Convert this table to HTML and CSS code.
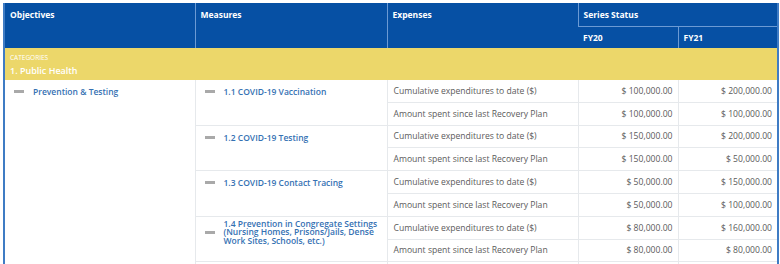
FILE: index.html
```html
<!DOCTYPE html>
<html>
<head>
<meta charset="utf-8">
<link rel="stylesheet" href="styles.css">
</head>
<body>
<div class="wrap">
<table class="grid">
  <colgroup>
    <col class="c-obj"><col class="c-mea"><col class="c-exp"><col class="c-fy"><col class="c-fy2">
  </colgroup>
  <thead>
    <tr class="h1">
      <th rowspan="2">Objectives</th>
      <th rowspan="2">Measures</th>
      <th rowspan="2">Expenses</th>
      <th colspan="2" class="ss">Series Status</th>
    </tr>
    <tr class="h2">
      <th>FY20</th>
      <th class="last">FY21</th>
    </tr>
  </thead>
  <tbody>
    <tr class="cat">
      <td colspan="5"><div class="cat-label">CATEGORIES</div><div class="cat-name">1. Public Health</div></td>
    </tr>
    <tr class="r">
      <td rowspan="9" class="obj"><div class="item"><span class="dash"></span><a>Prevention &amp; Testing</a></div></td>
      <td rowspan="2" class="mea"><div class="item"><span class="dash"></span><a>1.1 COVID-19 Vaccination</a></div></td>
      <td class="exp">Cumulative expenditures to date ($)</td>
      <td class="num">$ 100,000.00</td>
      <td class="num">$ 200,000.00</td>
    </tr>
    <tr class="r">
      <td class="exp">Amount spent since last Recovery Plan</td>
      <td class="num">$ 100,000.00</td>
      <td class="num">$ 100,000.00</td>
    </tr>
    <tr class="r">
      <td rowspan="2" class="mea"><div class="item"><span class="dash"></span><a>1.2 COVID-19 Testing</a></div></td>
      <td class="exp">Cumulative expenditures to date ($)</td>
      <td class="num">$ 150,000.00</td>
      <td class="num">$ 200,000.00</td>
    </tr>
    <tr class="r">
      <td class="exp">Amount spent since last Recovery Plan</td>
      <td class="num">$ 150,000.00</td>
      <td class="num">$ 50,000.00</td>
    </tr>
    <tr class="r">
      <td rowspan="2" class="mea"><div class="item"><span class="dash"></span><a>1.3 COVID-19 Contact Tracing</a></div></td>
      <td class="exp">Cumulative expenditures to date ($)</td>
      <td class="num">$ 50,000.00</td>
      <td class="num">$ 150,000.00</td>
    </tr>
    <tr class="r">
      <td class="exp">Amount spent since last Recovery Plan</td>
      <td class="num">$ 50,000.00</td>
      <td class="num">$ 100,000.00</td>
    </tr>
    <tr class="r">
      <td rowspan="2" class="mea tight"><div class="item"><span class="dash"></span><a>1.4 Prevention in Congregate Settings (Nursing Homes, Prisons/Jails, Dense Work Sites, Schools, etc.)</a></div></td>
      <td class="exp">Cumulative expenditures to date ($)</td>
      <td class="num">$ 80,000.00</td>
      <td class="num">$ 160,000.00</td>
    </tr>
    <tr class="r">
      <td class="exp">Amount spent since last Recovery Plan</td>
      <td class="num">$ 80,000.00</td>
      <td class="num">$ 80,000.00</td>
    </tr>
    <tr class="r tail">
      <td class="mea"></td>
      <td class="exp"></td>
      <td class="num"></td>
      <td class="num"></td>
    </tr>
  </tbody>
</table>
</div>
</body>
</html>
```
FILE: styles.css
```css
html, body {
  margin: 0;
  padding: 0;
  background: #ffffff;
  overflow: hidden;
}
body {
  font-family: "Open Sans", "Liberation Sans", sans-serif;
}
.wrap {
  padding: 3px 3px 0 3px;
}
.grid {
  width: 774px;
  border-collapse: collapse;
  table-layout: fixed;
  border-left: 2px solid #3f7cc4;
  border-right: 2px solid #3f7cc4;
}
.c-obj { width: 191px; }
.c-mea { width: 192px; }
.c-exp { width: 191px; }
.c-fy { width: 100px; }
.c-fy2 { width: 100px; }

thead th {
  background: #0650a4;
  color: #ffffff;
  font-size: 8.5px;
  font-weight: 700;
  text-align: left;
  vertical-align: top;
  padding: 6px 5px 0 5px;
  border-left: 1px solid #6b9ad4;
}
thead th:first-child { border-left: none; padding-left: 5px; }
.h1 th { height: 17px; }
.h2 th { height: 16px; border-top: 1px solid #6b9ad4; padding-top: 5px; }
thead th.ss { border-bottom: 1px solid #6b9ad4; }

.cat td {
  background: #ecd76a;
  color: #ffffff;
  height: 32px;
  padding: 0 5px;
  vertical-align: top;
}
.cat-label {
  font-size: 6.5px;
  margin-top: 5px;
  line-height: 9px;
}
.cat-name {
  font-size: 9px;
  font-weight: 600;
  line-height: 13px;
  margin-top: 2px;
}

.r td {
  height: 21.8px;
  padding: 0;
  border-bottom: 1px solid #e6e9ec;
  border-left: 1px solid #e6e9ec;
  font-size: 8.6px;
  color: #5b5b5b;
}
.r.tail td {
  height: 3px;
  border-bottom: none;
}
.r td.obj {
  border-left: none;
  border-bottom: none;
  vertical-align: top;
  padding: 5px 0 0 9px;
}
.r td.mea {
  vertical-align: top;
  padding: 5px 0 0 9px;
}
.r.tail td.mea { padding: 0; }
.r td.mea.tight { padding-top: 3px; }
.item {
  display: flex;
  align-items: center;
  gap: 9px;
}
.dash {
  flex: none;
  width: 10px;
  height: 3px;
  background: #a9a9a9;
}
.item a {
  color: #3571b3;
  font-size: 8.5px;
  font-weight: 600;
  line-height: 13px;
}
.tight .item a {
  line-height: 8.5px;
}
.r td.exp {
  padding: 0 6px;
  white-space: nowrap;
}
.r td.num {
  text-align: right;
  padding: 0 5px 0 0;
  white-space: nowrap;
}
```
